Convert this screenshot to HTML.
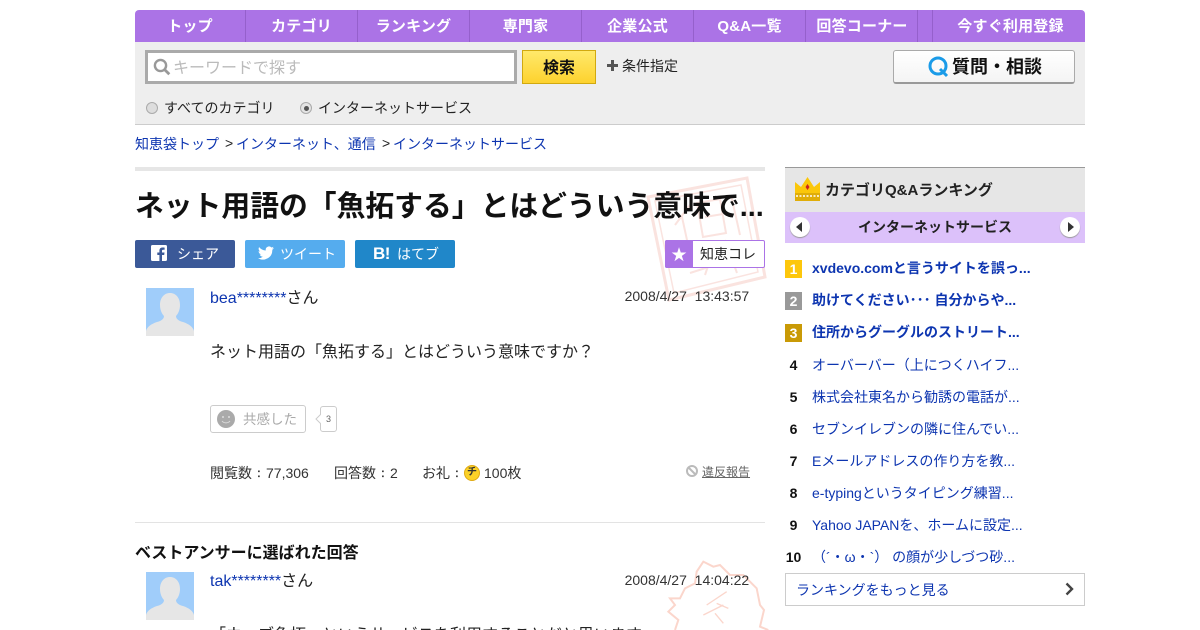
<!DOCTYPE html>
<html lang="ja"><head><meta charset="utf-8"><title>ネット用語の「魚拓する」</title>
<style>
*{box-sizing:border-box;margin:0;padding:0}
html,body{width:1200px;height:630px;overflow:hidden;background:#fff}
body{position:relative;font-family:"Liberation Sans","Noto Sans CJK JP",sans-serif;font-size:14px;color:#222}
.a{position:absolute;white-space:nowrap}
.l{color:#0d35b0}
.b{font-weight:bold}
.ip{font-family:"IPAGothic",sans-serif}
.nav{position:absolute;top:10px;height:32px;line-height:34px;text-align:center;color:#fff;font-weight:bold;font-size:15px;letter-spacing:.2px;background:#ab73e6;border-right:1px solid #9560cc}
.rn{position:absolute;left:785px;width:17px;height:18px;line-height:18px;text-align:center;font-weight:bold;font-size:14px;color:#fff}
.rt{position:absolute;left:812px;font-size:14px;line-height:20px;color:#0d35b0;white-space:nowrap}
.sb{position:absolute;top:240px;height:28px;width:100px;border-radius:2px;color:#fff;font-size:14px;line-height:29px}
</style></head><body>
<svg class="a" style="left:645px;top:175px" width="122" height="128" viewBox="0 0 122 128"><g fill="none" stroke="#fae3df" stroke-width="3"><path d="M3 22 102 3 120 102 24 125Z"/><path d="M10 26 96 10 113 97 29 118Z" stroke-width="1.500"/><path d="M30 50 45 30M37 42 47 88M52 28 75 24 81 58 58 62ZM60 42 78 39M86 20 95 60M70 70 60 100M80 65 92 98M45 98 70 90" stroke-width="2"/></g></svg>
<svg class="a" style="left:660px;top:555px" width="110" height="75" viewBox="0 0 330 225"><g fill="none" stroke="#fbd6cc" stroke-width="6"><path d="M45 225 55 195 25 170 45 150 30 130 60 130 75 100 105 85 110 50 130 20 160 35 180 30 210 60 250 60 290 100 300 150 312 165 300 215 325 225"/><path d="M200 110 140 150M170 145 205 160M130 180 190 150M165 175 190 205" stroke-width="4"/></g></svg>

<div class="nav" style="left:135px;width:111px;border-radius:4px 0 0 0">トップ</div>
<div class="nav" style="left:246px;width:112px">カテゴリ</div>
<div class="nav" style="left:358px;width:112px">ランキング</div>
<div class="nav" style="left:470px;width:112px">専門家</div>
<div class="nav" style="left:582px;width:112px">企業公式</div>
<div class="nav" style="left:694px;width:112px">Q&amp;A一覧</div>
<div class="nav" style="left:806px;width:112px;padding-left:1px">回答コーナー</div>
<div class="nav" style="left:918px;width:15px"></div>
<div class="nav" style="left:933px;width:152px;border:0;border-radius:0 4px 0 0;padding-left:3px">今すぐ利用登録</div>
<div class="a" style="left:135px;top:42px;width:950px;height:83px;background:#eee;border-bottom:1px solid #ccc"></div>

<div class="a" style="left:145px;top:50px;width:372px;height:34px;background:#fff;border:3px solid #aaa"></div>
<svg class="a" style="left:153px;top:58px" width="18" height="18" viewBox="0 0 18 18"><circle cx="7.500" cy="7.500" r="5.600" fill="none" stroke="#999" stroke-width="2.400"/><path d="M11.500 11.500 16.300 16.300" stroke="#999" stroke-width="2.800"/></svg>
<div class="a" style="left:173px;top:58px;font-size:16px;line-height:22px;color:#bbb">キーワードで探す</div>
<div class="a b" style="left:522px;top:50px;width:74px;height:34px;border:1px solid #d1a90f;background:linear-gradient(#ffe96b,#fdd22e);text-align:center;font-size:16px;line-height:36px;color:#111">検索</div>
<div class="a" style="left:607px;top:64px;width:11px;height:3px;background:#555"></div>
<div class="a" style="left:611px;top:60px;width:3px;height:11px;background:#555"></div>
<div class="a" style="left:622px;top:56px;line-height:20px;color:#222">条件指定</div>
<div class="a" style="left:893px;top:50px;width:182px;height:34px;border:1px solid #aaa;border-bottom:2px solid #999;border-radius:3px;background:linear-gradient(#fff,#f4f4f4)"></div>
<svg class="a" style="left:927px;top:55px" width="22" height="23" viewBox="0 0 22 23"><circle cx="11" cy="11" r="8" fill="none" stroke="#1a9be8" stroke-width="3"/><path d="M13 14 20 21" stroke="#1a9be8" stroke-width="3"/></svg>
<div class="a b" style="left:952px;top:54px;font-size:18px;line-height:26px;color:#111">質問・相談</div>

<div class="a" style="left:146px;top:102px;width:12px;height:12px;border-radius:50%;background:#ddd;border:1px solid #aaa"></div>
<div class="a" style="left:164px;top:98px;line-height:20px;color:#222">すべてのカテゴリ</div>
<div class="a" style="left:300px;top:102px;width:12px;height:12px;border-radius:50%;background:#e4e4e4;border:1px solid #aaa"></div>
<div class="a" style="left:303.500px;top:105.500px;width:5px;height:5px;border-radius:50%;background:#555"></div>
<div class="a" style="left:318px;top:98px;line-height:20px;color:#222">インターネットサービス</div>

<div class="a" style="left:135px;top:134px;line-height:20px"><span class="l">知恵袋トップ</span></div>
<div class="a" style="left:225px;top:133px;line-height:20px">&gt;</div>
<div class="a l" style="left:236px;top:134px;line-height:20px">インターネット、通信</div>
<div class="a" style="left:382px;top:133px;line-height:20px">&gt;</div>
<div class="a l" style="left:393px;top:134px;line-height:20px">インターネットサービス</div>

<div class="a" style="left:135px;top:167px;width:630px;height:4px;background:#e6e6e6"></div>
<div class="a b" style="left:135px;top:188px;font-size:28.800px;line-height:38px;color:#111;width:632px;overflow:hidden">ネット用語の「魚拓する」とはどういう意味で...</div>

<div class="sb" style="left:135px;background:#3b5998;padding-left:42px">シェア</div>
<svg class="a" style="left:151px;top:245px" width="16" height="16" viewBox="0 0 16 16"><path fill="#fff" d="M1.500 0h13A1.500 1.500 0 0 1 16 1.500v13a1.500 1.500 0 0 1-1.500 1.500H11V10h2.200l.3-2.500H11V6c0-.8.300-1.200 1.200-1.200h1.400V2.600C13 2.500 12.300 2.500 11.500 2.500 9.600 2.500 8.400 3.600 8.400 5.700v1.800H6.300V10h2.100v6H1.500A1.500 1.500 0 0 1 0 14.500v-13A1.500 1.500 0 0 1 1.500 0z"/></svg>
<div class="sb" style="left:245px;background:#55acee;padding-left:35px">ツイート</div>
<svg class="a" style="left:258px;top:246px" width="16" height="14" viewBox="0 0 16 13"><path fill="#fff" d="M16 1.500a6.500 6.500 0 0 1-1.900.5A3.300 3.300 0 0 0 15.500.2a6.500 6.500 0 0 1-2.100.8A3.300 3.300 0 0 0 7.800 4 9.300 9.300 0 0 1 1.100.6a3.300 3.300 0 0 0 1 4.400A3.300 3.300 0 0 1 .6 4.600c0 1.600 1.100 2.900 2.600 3.200a3.300 3.300 0 0 1-1.500.1 3.300 3.300 0 0 0 3.100 2.300A6.600 6.600 0 0 1 0 11.600 9.300 9.300 0 0 0 14.300 3.300 6.600 6.600 0 0 0 16 1.500z"/></svg>
<div class="sb" style="left:355px;background:#2087c9;padding-left:42px">はてブ</div>
<div class="a" style="left:373px;top:244px;font-size:17px;letter-spacing:-.5px;line-height:20px;font-weight:bold;color:#fff">B!</div>

<div class="a" style="left:665px;top:240px;width:100px;height:28px;border:1px solid #ab73e6;border-radius:2px;background:#fff"></div>
<div class="a" style="left:665px;top:240px;width:28px;height:28px;background:#ab73e6;border-radius:2px 0 0 2px;color:#fff;text-align:center;font-size:19px;line-height:30px;font-family:'DejaVu Sans',sans-serif">★</div>
<div class="a" style="left:700px;top:244px;line-height:20px;color:#222">知恵コレ</div>

<svg class="a" style="left:146px;top:288px" width="48" height="48" viewBox="0 0 48 48"><rect width="48" height="48" fill="#a0cdfa"/><path fill="#e6e6e6" d="M24 5c6 0 10 5 10 12 0 5-2 9-4 11 0 3 3 5 7 6 6 2 10 5 11 9v5H0v-5c1-4 5-7 11-9 4-1 7-3 7-6-2-2-4-6-4-11 0-7 4-12 10-12z"/></svg>
<div class="a" style="left:210px;top:288px;font-size:16px;line-height:22px"><span class="l">bea********</span>さん</div>
<div class="a" style="left:624.600px;top:286px;line-height:20px;color:#333">2008/4/27&nbsp;&nbsp;13:43:57</div>
<div class="a" style="left:210px;top:342px;font-size:16px;line-height:22px;color:#222">ネット用語の「魚拓する」とはどういう意味ですか？</div>

<div class="a" style="left:210px;top:405px;width:96px;height:28px;border:1px solid #ccc;border-radius:3px;background:#fff"></div>
<svg class="a" style="left:217px;top:410px" width="18" height="18" viewBox="0 0 18 18"><circle cx="9" cy="9" r="9" fill="#aaa"/><circle cx="6" cy="7" r="1" fill="#ddd"/><circle cx="12" cy="7" r="1" fill="#ddd"/><path d="M5 11c2 2.500 6 2.500 8 0" stroke="#ddd" fill="none"/></svg>
<div class="a" style="left:243px;top:410px;font-size:13.500px;line-height:20px;color:#aaa">共感した</div>
<div class="a" style="left:320px;top:406px;width:17px;height:26px;border:1px solid #ccc;border-radius:3px;text-align:center;font-size:9px;line-height:25px;color:#666;background:#fff">3</div>
<svg class="a" style="left:315px;top:413px" width="6" height="12" viewBox="0 0 6 12"><path d="M6 1 1 6 6 11" fill="#fff" stroke="#ccc"/></svg>

<div class="a" style="left:210px;top:463px;line-height:20px;color:#333">閲覧数<span class="ip">：</span>77,306</div>
<div class="a" style="left:334px;top:463px;line-height:20px;color:#333">回答数<span class="ip">：</span>2</div>
<div class="a" style="left:422px;top:463px;line-height:20px;color:#333">お礼<span class="ip">：</span></div>
<div class="a b" style="left:464px;top:465px;width:16px;height:16px;border-radius:50%;background:#fbd128;border:1px solid #e0aa12;text-align:center;font-size:10px;line-height:14px;color:#333">チ</div>
<div class="a" style="left:484px;top:463px;line-height:20px;color:#333">100枚</div>
<svg class="a" style="left:686px;top:465px" width="12" height="12" viewBox="0 0 12 12"><circle cx="6" cy="6" r="5" fill="none" stroke="#bbb" stroke-width="2"/><path d="M2.500 2.500 9.500 9.500" stroke="#bbb" stroke-width="2"/></svg>
<div class="a" style="left:702px;top:462px;font-size:12px;line-height:20px;color:#666;text-decoration:underline">違反報告</div>

<div class="a" style="left:135px;top:522px;width:630px;height:1px;background:#e3e3e3"></div>
<div class="a b" style="left:135px;top:543px;font-size:16px;line-height:22px;color:#111">ベストアンサーに選ばれた回答</div>
<svg class="a" style="left:146px;top:572px" width="48" height="48" viewBox="0 0 48 48"><rect width="48" height="48" fill="#a0cdfa"/><path fill="#e6e6e6" d="M24 5c6 0 10 5 10 12 0 5-2 9-4 11 0 3 3 5 7 6 6 2 10 5 11 9v5H0v-5c1-4 5-7 11-9 4-1 7-3 7-6-2-2-4-6-4-11 0-7 4-12 10-12z"/></svg>
<div class="a" style="left:210px;top:571px;font-size:16px;line-height:22px"><span class="l">tak********</span>さん</div>
<div class="a" style="left:624.600px;top:570px;line-height:20px;color:#333">2008/4/27&nbsp;&nbsp;14:04:22</div>
<div class="a" style="left:210px;top:625px;font-size:16px;line-height:22px;color:#222">「ウェブ魚拓」というサービスを利用することだと思います</div>

<div class="a" style="left:785px;top:167px;width:300px;height:45px;background:#e6e6e6;border-top:1px solid #999"></div>
<svg class="a" style="left:795px;top:176px" width="25" height="25" viewBox="0 0 25 25"><path fill="#fbc70a" d="M0 6 6 11 12.500 1 19 11 25 6V17H0Z"/><rect y="17" width="25" height="8" fill="#e0ad08"/><path d="M1 20H24" stroke="#fff" stroke-width="1.500" stroke-dasharray="2 1.500"/><path fill="#c22" d="M12.500 8 14.500 11 12.500 14 10.500 11Z"/></svg>
<div class="a b" style="left:825px;top:180px;font-size:15px;line-height:21px;color:#222">カテゴリQ&amp;Aランキング</div>
<div class="a b" style="left:785px;top:212px;width:300px;height:31px;background:#dcc1fa;text-align:center;font-size:14px;line-height:30px;color:#222">インターネットサービス</div>
<div class="a" style="left:790px;top:217px;width:20px;height:20px;border-radius:50%;background:#fff;box-shadow:0 1px 1px #999"></div>
<div class="a" style="left:796px;top:222px;width:0;height:0;border:5px solid transparent;border-left:0;border-right:6px solid #333"></div>
<div class="a" style="left:1060px;top:217px;width:20px;height:20px;border-radius:50%;background:#fff;box-shadow:0 1px 1px #999"></div>
<div class="a" style="left:1068px;top:222px;width:0;height:0;border:5px solid transparent;border-right:0;border-left:6px solid #333"></div>

<div class="rn" style="top:260px;background:#fdc70c">1</div><div class="rt b" style="top:258px">xvdevo.comと言うサイトを誤っ...</div>
<div class="rn" style="top:292px;background:#999">2</div><div class="rt b" style="top:290px">助けてください･･･ 自分からや...</div>
<div class="rn" style="top:324px;background:#c99a06">3</div><div class="rt b" style="top:322px">住所からグーグルのストリート...</div>
<div class="rn" style="top:356px;color:#111">4</div><div class="rt" style="top:355px">オーバーバー（上につくハイフ...</div>
<div class="rn" style="top:388px;color:#111">5</div><div class="rt" style="top:387px">株式会社東名から勧誘の電話が...</div>
<div class="rn" style="top:420px;color:#111">6</div><div class="rt" style="top:419px">セブンイレブンの隣に住んでい...</div>
<div class="rn" style="top:452px;color:#111">7</div><div class="rt" style="top:451px">Eメールアドレスの作り方を教...</div>
<div class="rn" style="top:484px;color:#111">8</div><div class="rt" style="top:483px">e-typingというタイピング練習...</div>
<div class="rn" style="top:516px;color:#111">9</div><div class="rt" style="top:515px">Yahoo JAPANを、ホームに設定...</div>
<div class="rn" style="top:548px;color:#111">10</div><div class="rt" style="top:547px">（´・ω・`） の顔が少しづつ砂...</div>

<div class="a" style="left:785px;top:573px;width:300px;height:33px;border:1px solid #ccc;background:#fff"></div>
<div class="a l" style="left:796px;top:580px;line-height:20px">ランキングをもっと見る</div>
<svg class="a" style="left:1064px;top:582px" width="12" height="14" viewBox="0 0 12 14"><path d="M2.500 1.500 8 7 2.500 12.500" fill="none" stroke="#444" stroke-width="2.400"/></svg>
</body></html>
